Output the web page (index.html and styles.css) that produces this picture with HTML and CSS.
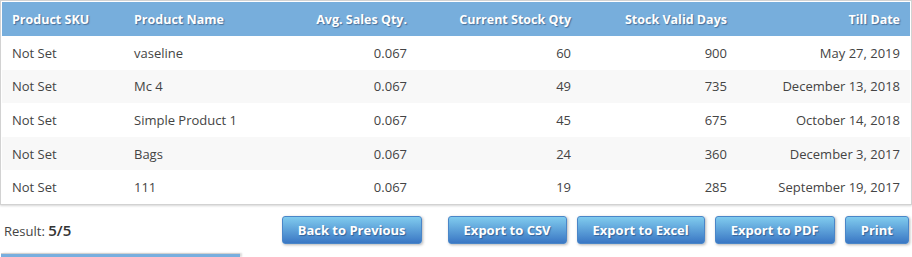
FILE: index.html
```html
<!DOCTYPE html>
<html>
<head>
<meta charset="utf-8">
<link rel="stylesheet" href="styles.css">
</head>
<body>
<div class="page">
  <div class="grid-wrap">
    <table class="grid">
      <colgroup>
        <col class="c1"><col class="c2"><col class="c3"><col class="c4"><col class="c5"><col class="c6">
      </colgroup>
      <thead>
        <tr>
          <th class="l">Product SKU</th>
          <th class="l">Product Name</th>
          <th class="r">Avg. Sales Qty.</th>
          <th class="r">Current Stock Qty</th>
          <th class="r">Stock Valid Days</th>
          <th class="r">Till Date</th>
        </tr>
      </thead>
      <tbody>
        <tr><td>Not Set</td><td>vaseline</td><td class="r">0.067</td><td class="r">60</td><td class="r">900</td><td class="r">May 27, 2019</td></tr>
        <tr><td>Not Set</td><td>Mc 4</td><td class="r">0.067</td><td class="r">49</td><td class="r">735</td><td class="r">December 13, 2018</td></tr>
        <tr><td>Not Set</td><td>Simple Product 1</td><td class="r">0.067</td><td class="r">45</td><td class="r">675</td><td class="r">October 14, 2018</td></tr>
        <tr><td>Not Set</td><td>Bags</td><td class="r">0.067</td><td class="r">24</td><td class="r">360</td><td class="r">December 3, 2017</td></tr>
        <tr><td>Not Set</td><td>111</td><td class="r">0.067</td><td class="r">19</td><td class="r">285</td><td class="r">September 19, 2017</td></tr>
      </tbody>
    </table>
  </div>
  <div class="footer">
    <div class="result">Result: <span class="count">5/5</span></div>
    <div class="buttons">
      <button class="btn back">Back to Previous</button>
      <button class="btn">Export to CSV</button>
      <button class="btn">Export to Excel</button>
      <button class="btn">Export to PDF</button>
      <button class="btn">Print</button>
    </div>
  </div>
  <div class="next-panel"></div>
</div>
</body>
</html>
```
FILE: styles.css
```css
html, body {
  margin: 0;
  padding: 0;
  background: #fff;
}
body {
  font-family: "Open Sans", "Noto Sans", sans-serif;
  font-size: 13px;
  color: #444;
  overflow: hidden;
}
.page {
  width: 912px;
  height: 257px;
}
.grid-wrap {
  margin-left: 0;
  width: 909px;
  padding: 1px 0 0 1px;
  border: 1px solid #d2d2d2;
  box-shadow: 0 1px 2px rgba(0,0,0,0.16);
}
.grid {
  width: 908px;
  border-collapse: collapse;
  table-layout: fixed;
}
.c1 { width: 122px; }
.c2 { width: 150px; }
.c3 { width: 143px; }
.c4 { width: 164px; }
.c5 { width: 156px; }
.c6 { width: auto; }
.grid th {
  background: #77aedc;
  color: #fff;
  font-size: 12.5px;
  font-weight: 700;
  height: 34px;
  padding: 0 10px;
  text-shadow: 1px 1px 1px rgba(40,70,110,0.6);
  white-space: nowrap;
}
.grid td {
  height: 33.6px;
  padding: 0 10px;
  color: #444;
  white-space: nowrap;
}
.grid tbody tr:nth-child(even) td {
  background: #f8f8f8;
}
.l { text-align: left; }
.r { text-align: right; }
.footer {
  display: flex;
  align-items: center;
  justify-content: space-between;
  margin-top: 11px;
  padding-right: 3px;
}
.result {
  padding-left: 4px;
  padding-top: 0;
  font-size: 13px;
  color: #444;
}
.count {
  font-size: 15px;
  font-weight: 600;
  color: #333;
}
.buttons {
  display: flex;
  gap: 10px;
}
.btn.back {
  margin-right: 16px;
}
.btn {
  font-family: inherit;
  font-size: 13px;
  font-weight: 700;
  color: #fff;
  height: 28px;
  padding: 0 15px;
  border: 1px solid #4a86c8;
  border-radius: 3px;
  background: linear-gradient(#80cbee, #3a77c4);
  text-shadow: 1px 1px 1px rgba(30,60,110,0.55);
  box-shadow: 1px 1px 3px rgba(0,0,0,0.3);
}
.next-panel {
  margin-top: 9px;
  margin-left: 1px;
  width: 239px;
  height: 3px;
  border-top: 1px solid #d0d0d0;
  background: #78aede;
  box-shadow: 2px 0 2px rgba(0,0,0,0.15);
}
```
